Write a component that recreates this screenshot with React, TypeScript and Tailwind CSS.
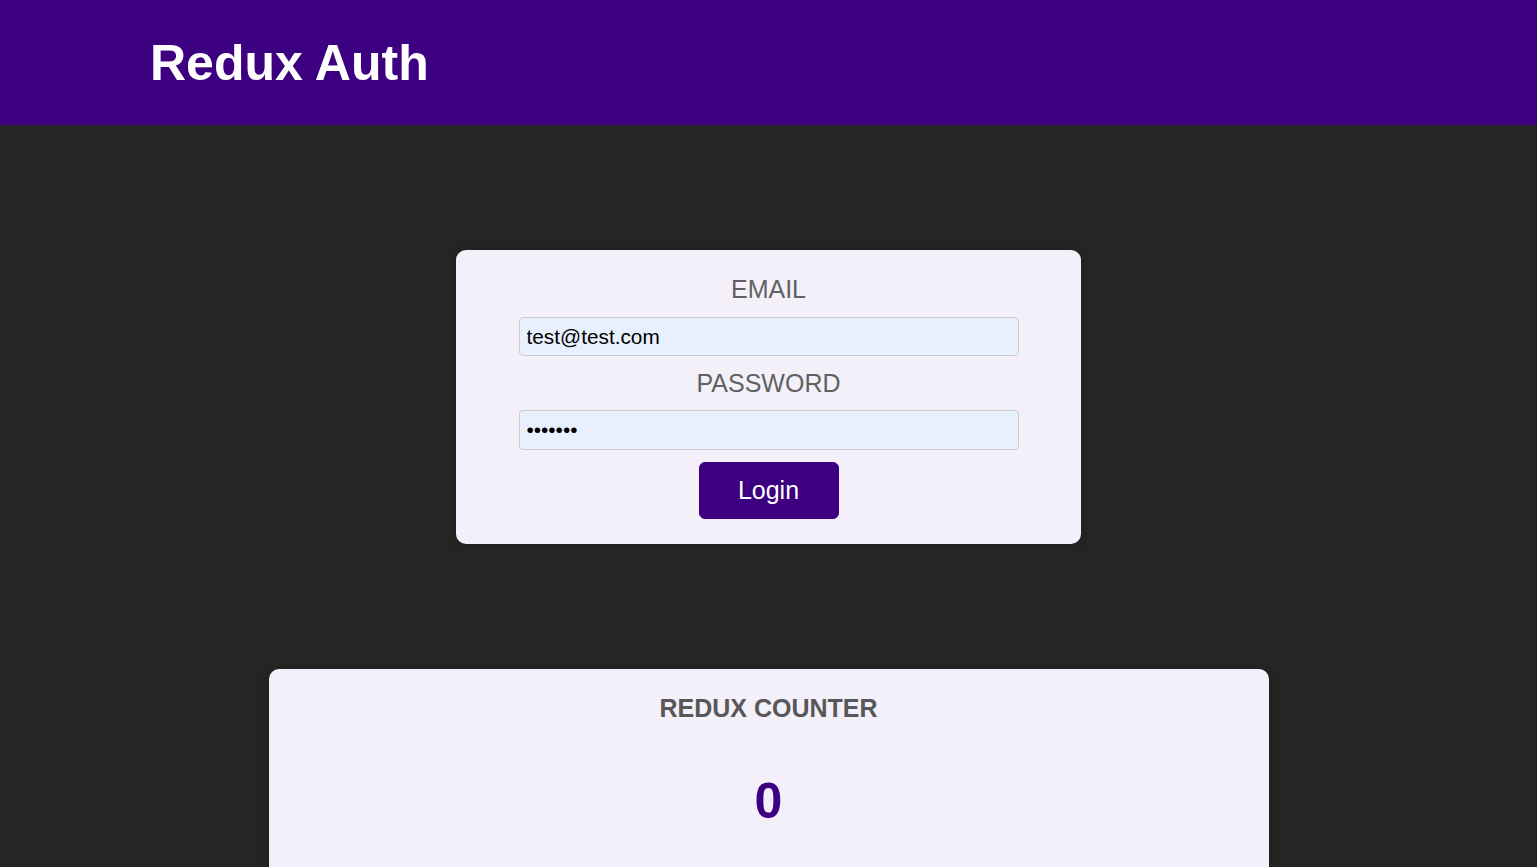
import { useState } from "react";

export default function App() {
  const [email, setEmail] = useState("test@test.com");
  const [password, setPassword] = useState("1234567");
  const [counter] = useState(0);

  return (
    <div className="min-h-screen bg-[#252525] font-['Liberation_Sans',Arial,sans-serif]">
      <header className="h-[125px] w-full bg-[#3c0080] flex items-center pl-[150px]">
        <h1 className="text-[50px] font-bold text-white leading-none">Redux Auth</h1>
      </header>

      <main className="flex flex-col items-center">
        {/* Auth card */}
        <section className="mt-[125px] w-[625px] rounded-[10px] bg-[#f4f0fa] px-[25px] pt-[25px] pb-[25px] text-center shadow-[0_1px_8px_rgba(0,0,0,0.2)]">
          <form onSubmit={(e) => e.preventDefault()}>
            <div>
              <label htmlFor="email" className="block text-[25px] leading-[28px] uppercase text-[#616161] mb-[14px]">
                Email
              </label>
              <input
                id="email"
                type="email"
                value={email}
                onChange={(e) => setEmail(e.target.value)}
                className="block mx-auto w-[500px] h-[39px] rounded-[4px] border border-[#ccc] bg-[#e8f0fe] px-[7px] text-[20.8px] text-black outline-none"
              />
            </div>
            <div className="mt-[13px]">
              <label htmlFor="password" className="block text-[25px] leading-[28px] uppercase text-[#616161] mb-[13px]">
                Password
              </label>
              <input
                id="password"
                type="password"
                value={password}
                onChange={(e) => setPassword(e.target.value)}
                className="block mx-auto w-[500px] h-[40px] rounded-[4px] border border-[#ccc] bg-[#e8f0fe] px-[7px] text-[20.8px] text-black outline-none"
              />
            </div>
            <button
              type="submit"
              className="mt-[12px] h-[57px] w-[140px] rounded-[6px] border border-[#3c0080] bg-[#3c0080] text-[25px] text-white cursor-pointer"
            >
              Login
            </button>
          </form>
        </section>

        {/* Counter card */}
        <section className="mt-[125px] w-[1000px] h-[300px] rounded-[10px] bg-[#f4f0fa] pt-[25px] text-center shadow-[0_1px_8px_rgba(0,0,0,0.2)]">
          <h1 className="text-[25px] leading-[29px] font-bold uppercase text-[#575757]">Redux Counter</h1>
          <div className="mt-[49px] text-[50px] leading-[58px] font-bold text-[#3c0080]">{counter}</div>
        </section>
      </main>
    </div>
  );
}
